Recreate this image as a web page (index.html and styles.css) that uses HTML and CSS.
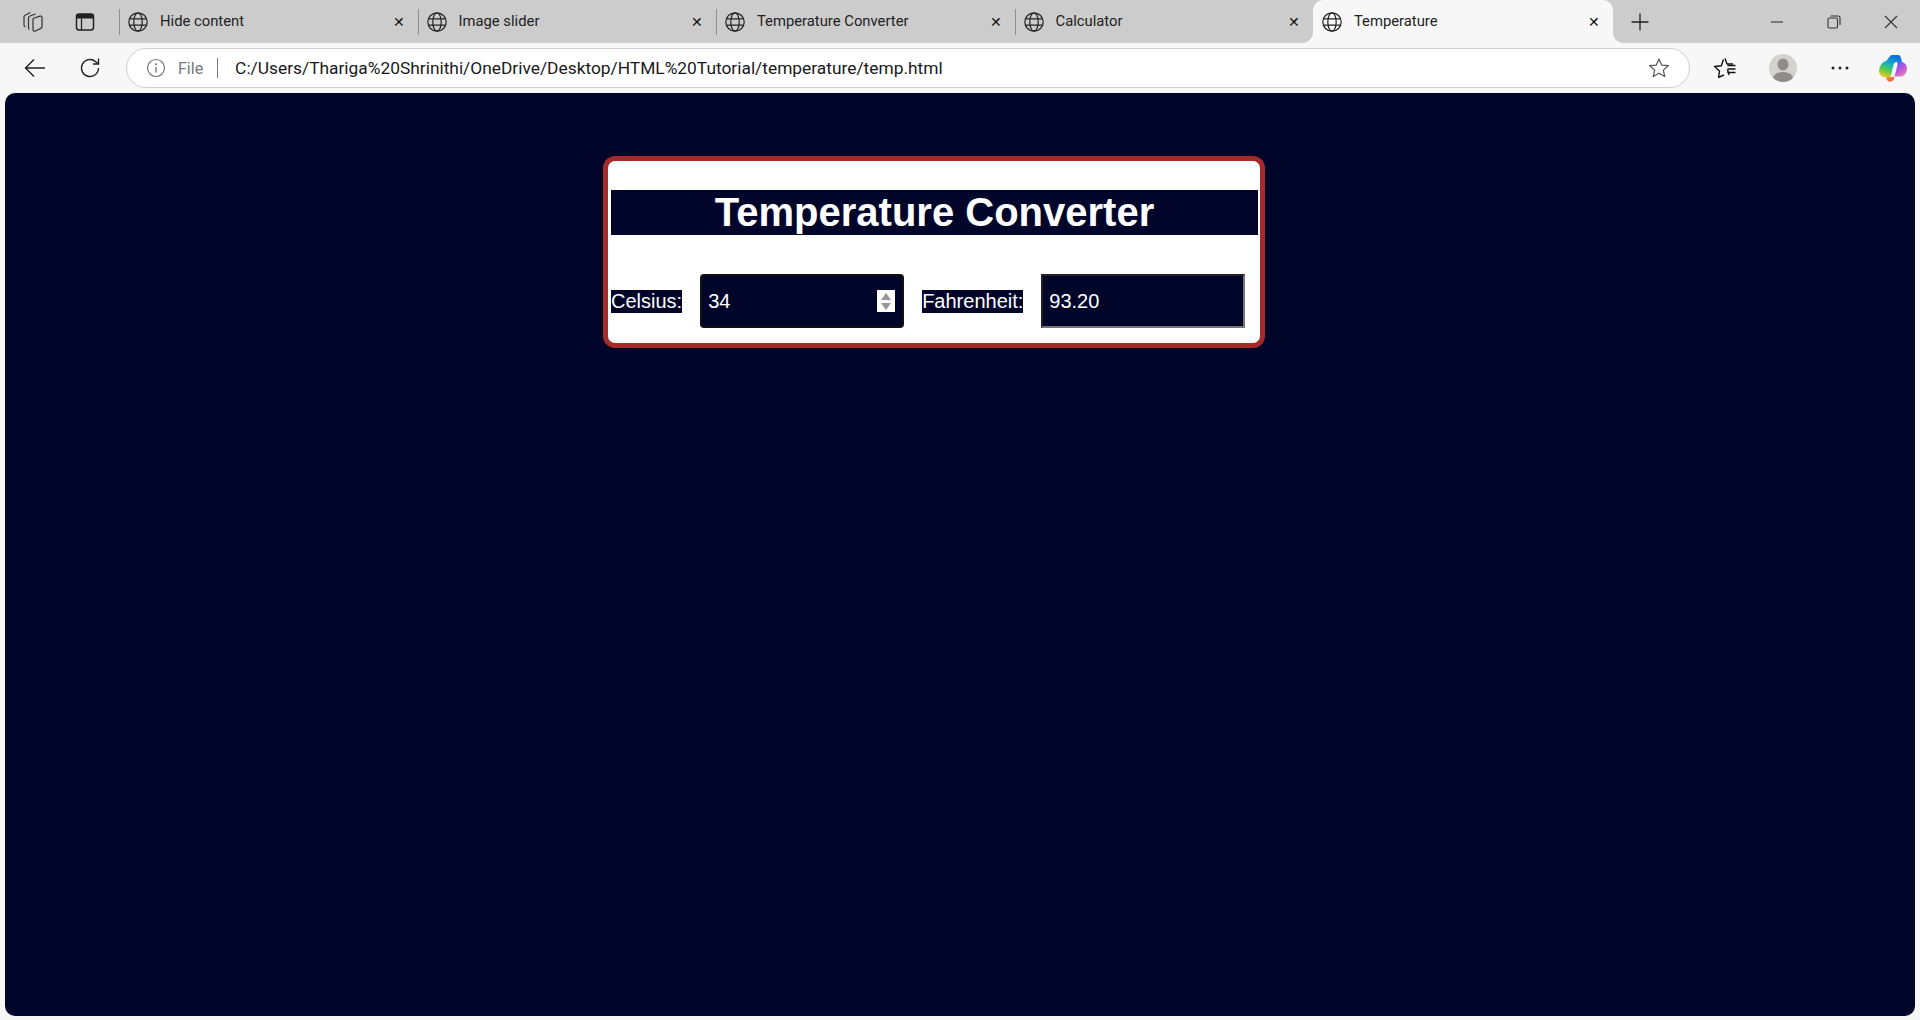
FILE: index.html
```html
<!DOCTYPE html>
<html lang="en">
<head>
    <meta charset="UTF-8">
    <title>Temperature</title>
    <link rel="stylesheet" href="styles.css">
</head>
<body>
    <div class="tabstrip">
        <div class="strip-left">
            <svg class="icon" width="24" height="24" viewBox="0 0 24 24"><path d="M12.500 8.200L19 6.200Q21 5.800 21 7.500V16.500Q21 17.800 19.800 18.400L14.500 21Q12 21.800 12 19.500V9.500Q12 8.500 12.500 8.200Z" fill="none" stroke="#333" stroke-width="1.200"/><path d="M8.500 19.500Q7.500 19 7.500 17.500V8Q7.500 6.500 9 6L14.500 4M4.500 17Q3 16.500 3 15V7Q3 5.500 4.500 5L9.500 2.500" fill="none" stroke="#333" stroke-width="1.200"/></svg>
            <svg class="icon tabs-icon" width="20" height="20" viewBox="0 0 20 20"><rect x="1.500" y="2" width="17" height="16" rx="2.500" fill="none" stroke="#222" stroke-width="1.500"/><path d="M1.500 4.500a2.500 2.500 0 0 1 2.500-2.500h12a2.500 2.500 0 0 1 2.500 2.500v2h-17z" fill="#222"/><path d="M6.500 6.500V18" stroke="#222" stroke-width="1.300"/></svg>
        </div>
        <div class="tab">
            <svg class="globe" width="20" height="20" viewBox="0 0 20 20"><use href="#globe"/></svg>
            <span class="tab-title">Hide content</span>
            <span class="tab-close">&#x2715;</span>
        </div>
        <div class="tab">
            <svg class="globe" width="20" height="20" viewBox="0 0 20 20"><use href="#globe"/></svg>
            <span class="tab-title">Image slider</span>
            <span class="tab-close">&#x2715;</span>
        </div>
        <div class="tab">
            <svg class="globe" width="20" height="20" viewBox="0 0 20 20"><use href="#globe"/></svg>
            <span class="tab-title">Temperature Converter</span>
            <span class="tab-close">&#x2715;</span>
        </div>
        <div class="tab">
            <svg class="globe" width="20" height="20" viewBox="0 0 20 20"><use href="#globe"/></svg>
            <span class="tab-title">Calculator</span>
            <span class="tab-close">&#x2715;</span>
        </div>
        <div class="tab active">
            <svg class="globe" width="20" height="20" viewBox="0 0 20 20"><use href="#globe"/></svg>
            <span class="tab-title">Temperature</span>
            <span class="tab-close">&#x2715;</span>
        </div>
        <svg class="new-tab" width="18" height="18" viewBox="0 0 18 18"><path d="M9 0.500V17.500M0.500 9H17.500" stroke="#222" stroke-width="1.300"/></svg>
        <div class="window-controls">
            <div class="win-btn"><svg width="14" height="14" viewBox="0 0 14 14"><path d="M1 7H13" stroke="#333" stroke-width="1.100"/></svg></div>
            <div class="win-btn"><svg width="14" height="14" viewBox="0 0 14 14"><rect x="1" y="3" width="9.500" height="10" rx="1.500" fill="none" stroke="#333" stroke-width="1.100"/><path d="M3.500 1H11a2 2 0 0 1 2 2V10" fill="none" stroke="#333" stroke-width="1.100"/></svg></div>
            <div class="win-btn"><svg width="14" height="14" viewBox="0 0 14 14"><path d="M1 1L13 13M13 1L1 13" stroke="#333" stroke-width="1.100"/></svg></div>
        </div>
    </div>

    <div class="toolbar">
        <div class="tool-btn"><svg width="22" height="20" viewBox="0 0 22 20"><path d="M21 10H1.500M10 1.500L1.500 10L10 18.500" fill="none" stroke="#222" stroke-width="1.400"/></svg></div>
        <div class="tool-btn"><svg width="22" height="22" viewBox="0 0 22 22"><path d="M19.500 11a8.500 8.500 0 1 1-2.700-6.200L19.500 7" fill="none" stroke="#222" stroke-width="1.400"/><path d="M19.500 1.500V7H14" fill="none" stroke="#222" stroke-width="1.400"/></svg></div>
        <div class="address-bar">
            <svg class="info-icon" width="20" height="20" viewBox="0 0 20 20"><circle cx="10" cy="10" r="8.500" fill="none" stroke="#777" stroke-width="1.200"/><path d="M10 9V14.500" stroke="#777" stroke-width="1.400"/><circle cx="10" cy="6.300" r="1" fill="#777"/></svg>
            <span class="scheme">File</span>
            <span class="divider"></span>
            <span class="url">C:/Users/Thariga%20Shrinithi/OneDrive/Desktop/HTML%20Tutorial/temperature/temp.html</span>
            <svg class="star-icon" width="22" height="22" viewBox="0 0 22 22"><path d="M11 2l2.700 6.100 6.600.6-5 4.400 1.500 6.500L11 16.200l-5.800 3.400 1.500-6.500-5-4.400 6.600-.6z" fill="none" stroke="#555" stroke-width="1.200" stroke-linejoin="round"/></svg>
        </div>
        <div class="tool-btn first-right"><svg width="24" height="24" viewBox="0 0 24 24"><path d="M12 2.500L14 8H20M14.500 13.500L16 19M16 21M5.500 21.500L6.500 15L1.500 10.500L8.300 9.800L10.500 3.500M5.500 21.500L11 18.800" fill="none" stroke="#111" stroke-width="1.400" stroke-linejoin="round"/><path d="M14.500 9.500H22.500M14.500 13H22.500M14.500 16.500H22.500" stroke="#111" stroke-width="1.400"/></svg></div>
        <div class="tool-btn"><span class="avatar"><svg width="28" height="28" viewBox="0 0 28 28"><ellipse cx="14" cy="10.500" rx="5.500" ry="6" fill="#8f8d89"/><ellipse cx="14" cy="24" rx="10" ry="6" fill="#8f8d89"/></svg></span></div>
        <div class="tool-btn dots"><svg width="20" height="6" viewBox="0 0 20 6"><circle cx="3" cy="3" r="1.500" fill="#222"/><circle cx="10" cy="3" r="1.500" fill="#222"/><circle cx="17" cy="3" r="1.500" fill="#222"/></svg></div>
        <div class="tool-btn copilot">
            <svg width="28" height="28" viewBox="0 0 28 28">
                <defs>
                    <linearGradient id="cpA" x1=".6" y1="0" x2=".2" y2="1"><stop offset="0" stop-color="#0f6fe0"/><stop offset=".4" stop-color="#12b0c4"/><stop offset=".7" stop-color="#5ccc48"/><stop offset="1" stop-color="#f7c820"/></linearGradient>
                    <linearGradient id="cpB" x1=".2" y1="0" x2=".8" y2="1"><stop offset="0" stop-color="#5a5cf0"/><stop offset=".5" stop-color="#bb55e6"/><stop offset="1" stop-color="#f58aa4"/></linearGradient>
                    <linearGradient id="cpC" x1="0" y1="0" x2="1" y2="1"><stop offset="0" stop-color="#f9a02a"/><stop offset="1" stop-color="#ee4050"/></linearGradient>
                </defs>
                <path d="M13 1H19C21 1 21.500 2.500 22 4L23 8H18C16 8 15 9 14.500 11L12 21C11.500 23 10 23 8.500 23H5C2 23 0 20 0 16.500C1 11 3.500 8 6 7.500C9 7 10 1 13 1Z" fill="url(#cpA)"/>
                <path d="M18 8H22C25.500 8 28 11 28 15C27.500 19 25.500 22 22 22.500H15.500L18.500 11C18.800 9.500 18.500 8.500 18 8Z" fill="url(#cpB)"/>
                <path d="M7 23H15.500L15 25C14 26.500 13 27.500 11.500 27.500H10C8.500 27.500 7.500 25.500 7 23Z" fill="url(#cpC)"/>
            </svg>
        </div>
    </div>

    <div class="page">
        <div class="card">
            <h1>Temperature Converter</h1>
            <div class="row">
                <label for="celsius">Celsius:</label>
                <div class="spin-wrap">
                    <input id="celsius" class="field rounded" type="number" value="34">
                    <span class="spinner"><i class="up"></i><i class="down"></i></span>
                </div>
                <label for="fahrenheit">Fahrenheit:</label>
                <input id="fahrenheit" class="field" type="text" value="93.20" readonly>
            </div>
        </div>
    </div>

    <svg class="sprite" width="0" height="0">
        <symbol id="globe" viewBox="0 0 20 20">
            <g fill="none" stroke="#222" stroke-width="1.200">
                <circle cx="10" cy="10" r="9.200"/>
                <ellipse cx="10" cy="10" rx="4.200" ry="9.200"/>
                <path d="M1.800 6.800H18.200M1.800 13.200H18.200"/>
            </g>
        </symbol>
    </svg>
</body>
</html>
```

FILE: styles.css
```css
html, body {
    height: 100%;
}
body {
    margin: 0;
    display: flex;
    flex-direction: column;
    background-color: #f7f7f7;
    font-family: Roboto, "Liberation Sans", sans-serif;
    overflow: hidden;
}
.sprite {
    position: absolute;
}

/* tab strip */
.tabstrip {
    display: flex;
    align-items: stretch;
    height: 43px;
    background-color: #cccccc;
}
.strip-left {
    display: flex;
    align-items: center;
    width: 119px;
    padding-left: 21px;
    box-sizing: border-box;
}
.tabs-icon {
    margin-left: 30px;
}
.tab {
    position: relative;
    display: flex;
    align-items: center;
    width: 298.5px;
    flex-shrink: 0;
    box-sizing: border-box;
    padding-left: 9px;
    font-size: 14.8px;
    color: #222;
}
.tab::before {
    content: "";
    position: absolute;
    left: 0;
    top: 9px;
    height: 26px;
    width: 1px;
    background-color: #8e8e8e;
}
.tab-title {
    margin-left: 12px;
    margin-bottom: 2px;
    flex: 1;
}
.tab-close {
    width: 14px;
    margin-right: 12px;
    font-size: 14px;
    text-align: center;
    color: #111;
}
.tab.active {
    width: 300px;
    background-color: #f7f7f7;
    border-radius: 10px 10px 0 0;
}
.tab.active::before, .tab.active::after {
    content: "";
    position: absolute;
    top: auto;
    bottom: 0;
    width: 10px;
    height: 10px;
}
.tab.active::before {
    left: -10px;
    background: radial-gradient(circle at 0 0, transparent 9.5px, #f7f7f7 10px);
}
.tab.active::after {
    right: -10px;
    background: radial-gradient(circle at 100% 0, transparent 9.5px, #f7f7f7 10px);
}
.new-tab {
    align-self: center;
    margin-left: 18px;
}
.window-controls {
    display: flex;
    margin-left: auto;
    margin-right: 1px;
}
.win-btn {
    width: 57px;
    display: flex;
    align-items: center;
    justify-content: center;
}

/* toolbar */
.toolbar {
    display: flex;
    align-items: center;
    height: 50px;
    padding-left: 7px;
    padding-right: 4px;
    box-sizing: border-box;
    background-color: #f7f7f7;
}
.tool-btn {
    width: 58px;
    height: 40px;
    flex-shrink: 0;
    display: flex;
    align-items: center;
    justify-content: center;
}
.tool-btn:nth-child(1), .tool-btn:nth-child(2) {
    width: 55px;
}
.first-right {
    margin-left: 6px;
}
.dots svg {
    margin-right: 2px;
}
.copilot {
    width: 46px;
}
.avatar {
    display: block;
    width: 28px;
    height: 28px;
    border-radius: 50%;
    overflow: hidden;
    background-color: #d3d2cf;
}
.avatar svg {
    display: block;
}
.address-bar {
    flex: 1;
    display: flex;
    align-items: center;
    height: 40px;
    margin-left: 9px;
    padding-left: 19px;
    padding-right: 19px;
    box-sizing: border-box;
    background-color: #ffffff;
    border: 1px solid #d0d0d0;
    border-radius: 20px;
}
.scheme {
    margin-left: 12px;
    font-size: 16px;
    color: #777;
}
.divider {
    width: 1px;
    height: 20px;
    margin-left: 14px;
    background-color: #777;
}
.url {
    flex: 1;
    margin-left: 17px;
    font-size: 17.35px;
    color: #1a1a1a;
}

/* page */
.page {
    flex: 1;
    margin: 0 5px 4px;
    padding: 63px 0 0 598px;
    background-color: #000529;
    border-radius: 10px;
}
.card {
    width: 662px;
    box-sizing: border-box;
    padding: 29px 2px 15px 3px;
    background-color: #ffffff;
    border: 5px solid brown;
    border-radius: 12px;
}
h1 {
    margin: 0 0 39px;
    font-family: "Liberation Sans", Arial, sans-serif;
    font-size: 40px;
    font-weight: bold;
    text-align: center;
    color: #ffffff;
    background-color: #000529;
}
.row {
    display: flex;
    align-items: center;
    gap: 18px;
}
label {
    font-family: "Liberation Sans", Arial, sans-serif;
    font-size: 20px;
    color: #ffffff;
    background-color: #000529;
}
.field {
    display: block;
    width: 204px;
    height: 54px;
    box-sizing: border-box;
    padding: 1px 6px;
    font-family: "Liberation Sans", Arial, sans-serif;
    font-size: 20px;
    color: #ffffff;
    background-color: #000529;
    border: 2px inset #767676;
    outline: none;
}
.rounded {
    border: 2px solid #111111;
    border-radius: 4px;
}
.rounded::-webkit-inner-spin-button {
    -webkit-appearance: none;
}
.spin-wrap {
    position: relative;
}
.spinner {
    position: absolute;
    top: 16px;
    right: 9px;
    width: 18px;
    height: 22px;
    box-sizing: border-box;
    padding: 3px 0 2px;
    display: flex;
    flex-direction: column;
    justify-content: space-between;
    align-items: center;
    background-color: #ffffff;
}
.spinner i {
    display: block;
    border-left: 5px solid transparent;
    border-right: 5px solid transparent;
}
.spinner .up {
    border-bottom: 7px solid #969696;
}
.spinner .down {
    border-top: 7px solid #969696;
}
```
